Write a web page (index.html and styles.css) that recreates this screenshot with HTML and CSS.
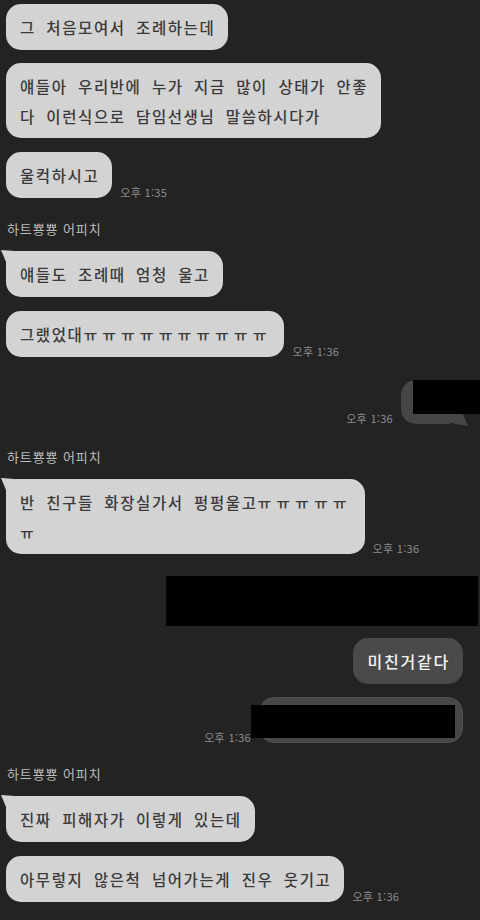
FILE: index.html
```html
<!DOCTYPE html>
<html lang="ko">
<head>
<meta charset="utf-8">
<title>chat</title>
<link rel="stylesheet" href="styles.css">
</head>
<body>
<div class="chat">
  <div class="row left first-row">
    <div class="bubble">그 처음모여서 조례하는데</div>
  </div>
  <div class="row left gap13">
    <div class="bubble">얘들아 우리반에 누가 지금 많이 상태가 안좋<br>다 이런식으로 담임선생님 말씀하시다가</div>
  </div>
  <div class="row left gap14">
    <div class="bubble">울컥하시고</div>
    <span class="time">오후 1:35</span>
  </div>

  <div class="name gap21">하트뿅뿅 어피치</div>
  <div class="row left gap12">
    <div class="bubble tail">얘들도 조례때 엄청 울고</div>
  </div>
  <div class="row left gap14">
    <div class="bubble">그랬었대<span class="tt">ㅠㅠㅠㅠㅠㅠㅠㅠㅠㅠ</span></div>
    <span class="time">오후 1:36</span>
  </div>

  <div class="row right gap23">
    <span class="time">오후 1:36</span>
    <div class="mine small-censor"><span class="censor censor-a"></span></div>
  </div>

  <div class="name gap23">하트뿅뿅 어피치</div>
  <div class="row left gap12">
    <div class="bubble tail">반 친구들 화장실가서 펑펑울고<span class="tt">ㅠㅠㅠㅠㅠ</span><br><span class="tt">ㅠ</span></div>
    <span class="time">오후 1:36</span>
  </div>

  <div class="row right gap22 r-block">
    <div class="block"></div>
  </div>
  <div class="row right gap12">
    <div class="mine text">미친거같다</div>
  </div>
  <div class="row right gap13">
    <span class="time">오후 1:36</span>
    <div class="mine wide-censor"><span class="censor censor-b"></span></div>
  </div>

  <div class="name gap21">하트뿅뿅 어피치</div>
  <div class="row left gap12">
    <div class="bubble tail">진짜 피해자가 이렇게 있는데</div>
  </div>
  <div class="row left gap14">
    <div class="bubble">아무렇지 않은척 넘어가는게 진우 웃기고</div>
    <span class="time">오후 1:36</span>
  </div>
</div>
</body>
</html>
```

FILE: styles.css
```css
* { box-sizing: border-box; }
html, body {
  margin: 0;
  padding: 0;
  background: #232323;
}
body {
  width: 480px;
  height: 920px;
  overflow: hidden;
  font-family: "Noto Sans CJK KR", "Noto Sans", sans-serif;
}
.chat {
  display: flex;
  flex-direction: column;
  padding-top: 4px;
}
.row {
  display: flex;
  align-items: flex-end;
}
.row.left { padding-left: 6px; }
.row.right { justify-content: flex-end; padding-right: 17px; }
.row.right.r-block { padding-right: 2px; }
.gap12 { margin-top: 12px; }
.gap13 { margin-top: 13px; }
.gap14 { margin-top: 14px; }
.gap21 { margin-top: 21px; }
.gap22 { margin-top: 22px; }
.gap23 { margin-top: 23px; }

.bubble {
  position: relative;
  background: #d3d3d3;
  color: #3a3a3a;
  font-size: 15.5px;
  font-weight: 500;
  letter-spacing: 1.6px;
  word-spacing: 4.5px;
  line-height: 30px;
  padding: 8px 13px 7px 14px;
  min-height: 46px;
  border-radius: 15px;
  white-space: nowrap;
}
.bubble.tail { border-top-left-radius: 10px; }
.bubble.tail::before {
  content: "";
  position: absolute;
  left: -5px;
  top: -1px;
  width: 14px;
  height: 12px;
  background: #d3d3d3;
  clip-path: polygon(0 0, 100% 8%, 100% 100%, 36% 100%);
}
.tt {
  font-size: 15px;
  line-height: 1;
  letter-spacing: 5px;
}
.time {
  font-size: 11px;
  line-height: 14px;
  color: #8c8c8c;
  margin: 0 8px -1px 8px;
  white-space: nowrap;
  letter-spacing: 0.3px;
}
.name {
  padding-left: 7px;
  font-size: 13px;
  letter-spacing: 0.9px;
  line-height: 20px;
  color: #bdbdbd;
}

.mine {
  position: relative;
  background: #4a4a4a;
  border-radius: 15px;
}
.mine.text {
  color: #f2f2f2;
  font-size: 16px;
  font-weight: 500;
  letter-spacing: 1.8px;
  line-height: 30px;
  padding: 8px 13px 8px 14px;
  height: 46px;
  white-space: nowrap;
}
.small-censor {
  width: 61px;
  height: 44px;
  margin-right: 1px;
  background: #464646;
}
.small-censor::after {
  content: "";
  position: absolute;
  right: -6px;
  bottom: -2px;
  width: 14px;
  height: 12px;
  background: #464646;
  clip-path: polygon(64% 0, 100% 100%, 0 82%, 0 0);
}
.censor {
  position: absolute;
  background: #000;
}
.censor-a {
  left: 12px;
  top: 0;
  width: 80px;
  height: 34px;
}
.wide-censor {
  width: 204px;
  height: 46px;
  background: #474747;
  border: 1px solid #505050;
}
.censor-b {
  left: -9px;
  top: 7px;
  width: 204px;
  height: 33px;
}
.block {
  position: relative;
  width: 312px;
  height: 50px;
  background: #000;
}
.block::before {
  content: "";
  position: absolute;
  left: -9px;
  top: 16px;
  width: 12px;
  height: 36px;
  background: #2b2b2b;
  border-radius: 3px 0 0 3px;
  z-index: -1;
}
```
